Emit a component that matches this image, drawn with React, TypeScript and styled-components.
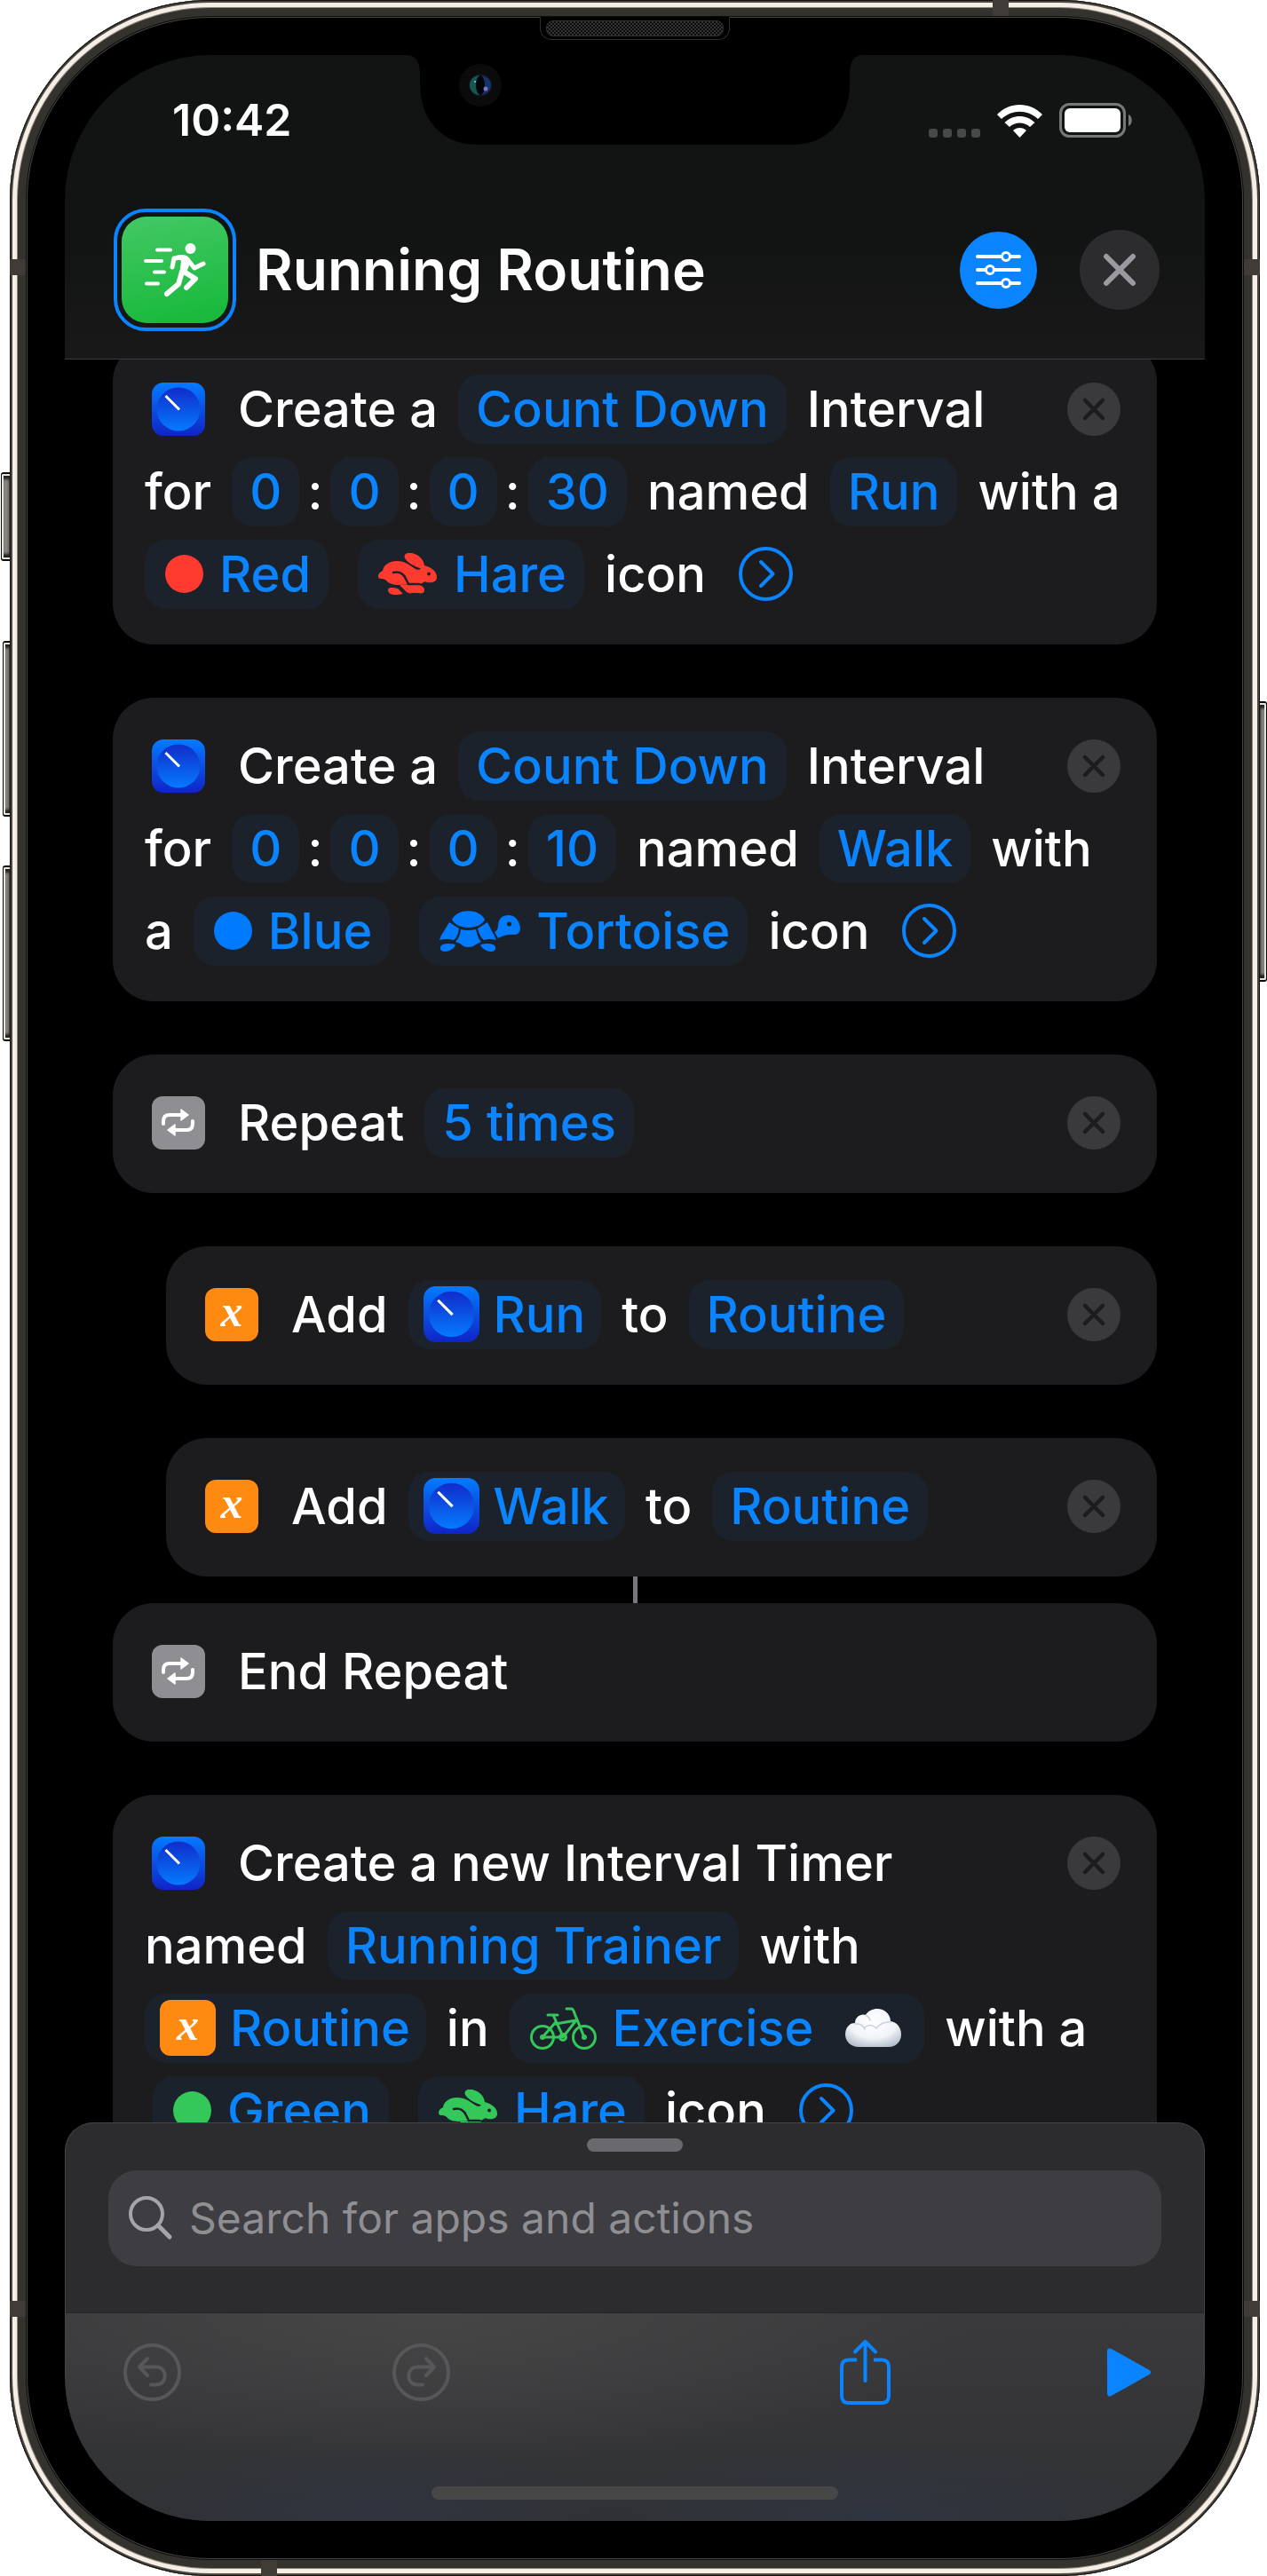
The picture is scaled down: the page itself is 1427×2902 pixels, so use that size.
import React from "react";
import styled, { createGlobalStyle } from "styled-components";

const blue = "#0a84ff";
const chipFill = "#1c222b";

const GlobalStyle = createGlobalStyle`
  * { box-sizing: border-box; }
  body { margin: 0; background: #fff; font-family: Inter, "Liberation Sans", sans-serif; color: #fff; }
  button { font: inherit; color: inherit; border: 0; padding: 0; background: none; cursor: pointer; }
  svg { display: block; flex: none; }
`;

/* ---------- Device ---------- */

const Stage = styled.div`
  padding: 0 8px 0 11px;
`;

const Device = styled.div`
  position: relative;
  display: flex;
  height: 100vh;
  padding: 62px;
  border-radius: 226px;
  background: #000;
  box-shadow: inset 0 0 0 1px #11110f, inset 0 0 0 3px #4a4843, inset 0 0 0 8px #f6ede5, inset 0 0 0 9px #8b8680,
    inset 0 0 0 18px #33322d, inset 0 0 0 19px #0c0c0c, inset 0 0 0 20px #454545;
`;

const SideKey = styled.span<{ $side: "left" | "right"; $top: number; $height: number; $depth: number }>`
  position: absolute;
  ${(p) => p.$side}: ${(p) => -p.$depth}px;
  top: ${(p) => p.$top}px;
  width: ${(p) => p.$depth}px;
  height: ${(p) => p.$height}px;
  border: solid #0b0b0a;
  border-width: ${(p) => (p.$side === "left" ? "2px 0 2px 1px" : "2px 1px 2px 0")};
  border-radius: ${(p) => (p.$side === "left" ? "3px 0 0 3px" : "0 3px 3px 0")};
  background: #85847f;
  box-shadow: inset ${(p) => (p.$side === "left" ? "2px" : "-2px")} 0 0 #e6e5dc, inset 0 2px 0 #e6e5dc,
    inset 0 -2px 0 #e6e5dc, inset 0 6px 3px #22221f, inset 0 -6px 3px #22221f;
`;

const Band = styled.span<{ $edge: "left" | "right" | "top" | "bottom"; $at: number }>`
  position: absolute;
  background: #413b38;
  ${(p) => p.$edge}: 0;
  ${(p) =>
    p.$edge === "left" || p.$edge === "right"
      ? `top: ${p.$at}px; width: 18px; height: 18px;`
      : `${p.$edge === "top" ? "right" : "left"}: ${p.$at}px; width: 18px; height: 18px;`}
`;

const Speaker = styled.span`
  position: absolute;
  top: 19px;
  left: 50%;
  width: 214px;
  height: 26px;
  margin-left: -107px;
  padding: 4px 6px;
  border: 1px solid #2c2c2c;
  border-top: 0;
  border-radius: 0 0 13px 13px;
  background: #000;

  &::before {
    content: "";
    display: block;
    height: 16px;
    border: 1px solid #303030;
    border-radius: 8px;
    background: repeating-conic-gradient(#333 0 25%, #0c0c0c 0 50%) 0 0 / 4px 4px;
  }
`;

const Screen = styled.main`
  position: relative;
  flex: 1;
  min-width: 0;
  display: flex;
  flex-direction: column;
  overflow: hidden;
  border-radius: 164px;
  background: #000;
`;

const NotchShape = styled.svg`
  position: absolute;
  top: 0;
  left: 50%;
  margin-left: -258px;
`;

/* ---------- Header ---------- */

const Header = styled.header`
  position: relative;
  z-index: 1;
  flex: none;
  border-bottom: 1px solid #3b3c3c;
  background: linear-gradient(#121413, #121413 60%, #181918);
`;

const StatusBar = styled.div`
  display: flex;
  align-items: center;
  justify-content: space-between;
  height: 146px;
  padding: 0 81px 0 121px;
  font-size: 50px;
  font-weight: 600;
`;

const StatusIcons = styled.div`
  display: flex;
  align-items: flex-end;
  gap: 19px;
`;

const TitleBar = styled.div`
  display: flex;
  align-items: center;
  padding: 27px 51px 31px 55px;
`;

const ShortcutIcon = styled.button`
  width: 138px;
  height: 138px;
  padding: 5px;
  border: 4px solid ${blue};
  border-radius: 36px;
`;

const Title = styled.h1`
  flex: 1;
  margin: 0 0 0 22px;
  font-size: 64px;
  line-height: 80px;
  font-weight: 600;
  white-space: nowrap;
`;

const RoundButton = styled.button<{ $size: number; $fill: string }>`
  display: flex;
  align-items: center;
  justify-content: center;
  flex: none;
  width: ${(p) => p.$size}px;
  height: ${(p) => p.$size}px;
  border-radius: 50%;
  background: ${(p) => p.$fill};

  & + & { margin-left: 48px; }
`;

/* ---------- Actions ---------- */

const ActionList = styled.div`
  flex: 1;
  min-height: 0;
  display: flex;
  flex-direction: column;
  gap: 60px;
  margin-top: -21px;
  padding: 0 54px;
  overflow: hidden;
`;

const Group = styled.div`
  display: flex;
  flex-direction: column;
  align-items: center;
`;

const Connector = styled.span`
  width: 5px;
  height: 30px;
  background: #77777d;
`;

const Card = styled.section<{ $nested?: boolean }>`
  flex: none;
  align-self: stretch;
  margin-left: ${(p) => (p.$nested ? 60 : 0)}px;
  padding: 30px 41px 33px 36px;
  border-radius: 46px;
  background: #1c1c1e;
  font-size: 56px;
  font-weight: 500;
`;

const Line = styled.div<{ $indent?: boolean }>`
  display: flex;
  align-items: center;
  gap: 23px;
  height: 93px;
  padding-left: ${(p) => (p.$indent ? 9 : 0)}px;
  line-height: 78px;
  white-space: nowrap;
`;

const AppIcon = styled.span`
  display: flex;
  flex: none;
  margin: 0 14px 0 8px;
`;

const Chip = styled.button<{ $icon?: "glyph" | "app" }>`
  display: flex;
  align-items: center;
  flex: none;
  gap: ${(p) => (p.$icon === "app" ? 16 : 18)}px;
  height: 78px;
  padding: ${(p) => (p.$icon === "app" ? "0 18px 0 17px" : p.$icon === "glyph" ? "0 20px 0 23px" : "0 20px")};
  border-radius: 24px;
  background: ${chipFill};
  color: ${blue};

  & + & { margin-left: 10px; }
`;

const TrailingEmoji = styled.span`
  margin: 0 6px 0 18px;
`;

const Duration = styled.span`
  display: flex;
  align-items: center;
`;

const Colon = styled.span`
  width: 35px;
  text-align: center;
`;

const More = styled.button`
  margin-left: 14px;
`;

const Remove = styled.button`
  margin-left: auto;
`;

const VariableTile = styled.span<{ $size: number }>`
  display: flex;
  align-items: center;
  justify-content: center;
  width: ${(p) => p.$size}px;
  height: ${(p) => p.$size}px;
  padding-bottom: 8px;
  border-radius: 12px;
  background: #ff8a12;
  color: #fff;
  font: italic bold 50px/50px "Liberation Serif", serif;
`;

/* ---------- Bottom sheet ---------- */

const Sheet = styled.footer`
  position: relative;
  flex: none;
  border: 1px solid #454547;
  border-width: 1px 1px 0;
  border-radius: 32px 32px 0 0;
  background: #2c2c2e;
  overflow: hidden;
`;

const Grabber = styled.div`
  width: 108px;
  height: 15px;
  margin: 17px auto 21px;
  border-radius: 8px;
  background: #69696e;
`;

const SearchField = styled.label`
  display: flex;
  align-items: center;
  gap: 18px;
  height: 108px;
  margin: 0 48px 52px;
  padding: 0 22px;
  border-radius: 32px;
  background: #3e3d42;
`;

const SearchInput = styled.input`
  flex: 1;
  min-width: 0;
  height: 80px;
  padding: 0;
  border: 0;
  outline: 0;
  background: none;
  color: #fff;
  font: 400 48px/80px Inter, "Liberation Sans", sans-serif;

  &::placeholder { color: #8e8e93; opacity: 1; }
`;

const Toolbar = styled.div`
  display: flex;
  flex-direction: column;
  justify-content: space-between;
  height: 235px;
  padding: 28px 0 24px;
  border-top: 1px solid #252527;
  background:
    radial-gradient(ellipse 300px 90px at 27% 100%, #2f3440, transparent),
    radial-gradient(ellipse 340px 90px at 71% 100%, #2e3440, transparent),
    radial-gradient(ellipse 620px 170px at 32% 0, #464647, transparent),
    linear-gradient(#3a3a3c, #303133);
`;

const Tools = styled.div`
  display: flex;
  justify-content: space-between;
  padding: 0 60px 0 65px;
`;

const ToolGroup = styled.div<{ $gap: number }>`
  display: flex;
  align-items: center;
  gap: ${(p) => p.$gap}px;
  height: 76px;
`;

const HomeIndicator = styled.div`
  align-self: center;
  width: 458px;
  height: 15px;
  border-radius: 8px;
  background: #474747;
`;

/* ---------- Drawings ---------- */

const Notch = () => (
  <NotchShape width="516" height="101" viewBox="0 0 516 101" aria-hidden="true">
    <path d="M0 0 C12 0 16 8 16 22 V32 C16 76 44 101 80 101 H436 C472 101 500 76 500 32 V22 C500 8 504 0 516 0 Z" fill="#000" />
    <circle cx="84" cy="34" r="24" fill="#0b0b0c" />
    <circle cx="84" cy="34" r="13" fill="#111316" />
    <ellipse cx="84" cy="34" rx="12" ry="11" fill="#15346f" />
    <path d="M83 23 A11 11 0 0 0 83 45 Z" fill="#175750" />
    <ellipse cx="84" cy="34" rx="5" ry="11" fill="#02040a" />
    <circle cx="90" cy="38" r="2.500" fill="#8a6fb8" />
    <circle cx="78" cy="30" r="1" fill="#7fd0e8" />
  </NotchShape>
);

const Cellular = () => (
  <svg width="58" height="10" viewBox="0 0 58 10" fill="#474948" aria-hidden="true">
    {[0, 16, 32, 48].map((x) => (
      <rect key={x} x={x} width="10" height="10" rx="3" />
    ))}
  </svg>
);

const Wifi = () => (
  <svg width="51" height="37" viewBox="0 0 51 37" fill="#fff" aria-hidden="true">
    <path d="M0 11 C14 -3.600 37 -3.600 51 11 L46 16 C34 5 17 5 5 16 Z" />
    <path d="M8.500 20 C18 10.500 33 10.500 42.500 20 L37 25 C31 19 20 19 14 25 Z" />
    <path d="M18 29 C22 25 29 25 33 29 L25.500 37 Z" />
  </svg>
);

const Battery = () => (
  <svg width="83" height="39" viewBox="0 0 83 39" aria-hidden="true">
    <rect x="1.500" y="1.500" width="72" height="36" rx="10" fill="none" stroke="#77787a" strokeWidth="3" />
    <rect x="6" y="6" width="63" height="27" rx="6" fill="#fff" />
    <path d="M78 13 C83 15 83 24 78 26 Z" fill="#77787a" />
  </svg>
);

const Runner = () => (
  <svg width="120" height="120" viewBox="0 0 120 120" aria-hidden="true">
    <defs>
      <linearGradient id="green" x1="0" y1="0" x2=".2" y2="1">
        <stop offset="0" stopColor="#43c865" />
        <stop offset="1" stopColor="#1bba3e" />
      </linearGradient>
    </defs>
    <rect width="120" height="120" rx="28" fill="url(#green)" />
    <circle cx="77.500" cy="36" r="6" fill="#fff" />
    <path d="M61 44 Q67 42 73 44 Q77 46 77 52 L72 66 L65 66 L67 50 Z" fill="#fff" />
    <g fill="none" stroke="#fff" strokeLinecap="round" strokeLinejoin="round">
      <path strokeWidth="4" d="M40 37.500H55M27 50H45M37 62.500H48M28 75.500H41" />
      <path strokeWidth="5" d="M57 57 L59 47 L70 46 M74 48 L82 58 L92 53" />
      <path strokeWidth="6" d="M68 62 L64 76 L51 87 M70 62 L83 70 L73 80" />
    </g>
  </svg>
);

const Sliders = () => (
  <svg width="51" height="44" viewBox="0 0 51 44" stroke="#fff" strokeWidth="4" strokeLinecap="round" fill={blue} aria-hidden="true">
    <path d="M2 7H49M2 22H49M2 37H49" />
    <circle cx="34" cy="7" r="4.500" strokeWidth="3" />
    <circle cx="16" cy="22" r="4.500" strokeWidth="3" />
    <circle cx="34" cy="37" r="4.500" strokeWidth="3" />
  </svg>
);

const Cross = () => (
  <svg width="38" height="38" viewBox="0 0 38 38" stroke="#9a9aa1" strokeWidth="6" strokeLinecap="round" aria-hidden="true">
    <path d="M4 4L34 34M34 4L4 34" />
  </svg>
);

const RemoveButton = () => (
  <Remove aria-label="Remove action">
    <svg width="60" height="60" viewBox="0 0 60 60" aria-hidden="true">
      <circle cx="30" cy="30" r="30" fill="#3a3a3c" />
      <path d="M20 20L40 40M40 20L20 40" stroke="#1c1c1e" strokeWidth="4.500" strokeLinecap="round" />
    </svg>
  </Remove>
);

const MoreButton = () => (
  <More aria-label="Show more">
    <svg width="61" height="61" viewBox="0 0 61 61" fill="none" stroke={blue} strokeWidth="4" strokeLinecap="round" strokeLinejoin="round" aria-hidden="true">
      <circle cx="30.500" cy="30.500" r="28.500" />
      <path d="M25 17L38.500 30.500L25 44" />
    </svg>
  </More>
);

const Dial = ({ size = 60 }: { size?: number }) => (
  <svg width={size} height={size} viewBox="0 0 60 60" aria-hidden="true">
    <defs>
      <linearGradient id="dialOuter" x1="0" y1="0" x2="0" y2="1">
        <stop offset="0" stopColor="#047bff" />
        <stop offset="1" stopColor="#1024c6" />
      </linearGradient>
      <linearGradient id="dialInner" x1="0" y1="0" x2="0" y2="1">
        <stop offset="0" stopColor="#102cc9" />
        <stop offset="1" stopColor="#057aff" />
      </linearGradient>
    </defs>
    <rect width="60" height="60" rx="13" fill="url(#dialOuter)" />
    <circle cx="30" cy="30" r="24.500" fill="url(#dialInner)" />
    <path d="M15.500 15L31 30.500" stroke="#fff" strokeWidth="3" />
  </svg>
);

const Repeat = () => (
  <svg width="60" height="60" viewBox="0 0 60 60" aria-hidden="true">
    <rect width="60" height="60" rx="12" fill="#8e8e93" />
    <path d="M13 31V28Q13 21 20 21H34M46 28V31Q46 38 39 38H26" fill="none" stroke="#fff" strokeWidth="4" strokeLinecap="round" />
    <path d="M33 15L41 21L33 27ZM26 32L18 38L26 44Z" fill="#fff" stroke="#fff" strokeWidth="1.500" strokeLinejoin="round" />
  </svg>
);

const Dot = ({ color }: { color: string }) => (
  <svg width="43" height="43" viewBox="0 0 43 43" fill={color} aria-hidden="true">
    <circle cx="21.500" cy="21.500" r="21.500" />
  </svg>
);

const Hare = ({ color }: { color: string }) => (
  <svg width="67" height="48" viewBox="0 0 67 48" fill={color} aria-hidden="true">
    <path d="M0 26 C0 23 3 21 5 20 C6 13 13 9 21 9 C30 9 36 14 42 18 C45 20 49 18 47 17 C41 15 33 11 30 6 C28 1 33 -1 38 0 C46 2 51 7 52 14 C60 16 66 21 66 27 C66 32 62 34 55 33 C52 30 49 36 46 34 L22 36 C18 36 14 35 11 33 C8 29 5 29 3 29 C1 29 0 28 0 26 Z" />
    <path d="M24 36 C30 35 42 36 46 36 C50 37 52 39 52 42 C52 45 49 46 45 45 L39 45 C35 46 33 45 31 43 Z" />
    <path d="M11 41 C12 38 18 39 22 40 L28 46 C22 47 11 49 11 41 Z" />
    <path d="M17 22 C24 20 29 24 31 29 L34 35 L46 35" fill="none" stroke={chipFill} strokeWidth="2.500" strokeLinecap="round" />
    <circle cx="57" cy="23.500" r="2" fill={chipFill} />
  </svg>
);

const Tortoise = () => (
  <svg width="91" height="46" viewBox="0 0 91 46" fill="#007aff" aria-hidden="true">
    <path d="M14 10 C20 -3 45 -3 51 10 Q49 14 43 17 Q32 21 22 17 Q16 14 14 10 Z" />
    <path d="M11 13 L22 20 Q21 29 16 33 Q8 31 0 33 Q1 28 5 23 Z" />
    <path d="M54 13 L43 20 Q45 29 50 33 Q57 31 64 33 Q62 28 59 23 Z" />
    <path d="M24 21 Q32 23 41 21 Q43 31 47 35 Q42 37 38 40 Q32 42 27 40 Q23 36 18 35 Q23 30 24 21 Z" />
    <path d="M1 41 Q2 37 10 37 Q17 37 18 39 Q14 45 7 46 Q0 46 1 41 Z" />
    <path d="M63 41 Q62 37 54 37 Q47 37 46 39 Q50 45 57 46 Q64 46 63 41 Z" />
    <path d="M66 31 L62 24 Q66 22 66 16 Q67 5 78 5 Q88 5 91 19 Q91 26 85 27 Q75 26 66 31 Z" />
    <circle cx="78.500" cy="15" r="2.500" fill={chipFill} />
  </svg>
);

const Bicycle = () => (
  <svg width="75" height="48" viewBox="0 0 75 48" fill="none" stroke="#34c759" strokeWidth="3" strokeLinecap="round" strokeLinejoin="round" aria-hidden="true">
    <circle cx="14" cy="34" r="12.500" />
    <circle cx="61" cy="34" r="12.500" />
    <path d="M20 9H31M26 9L37 33M41 2H47Q49 3 50 7L61 34M29 17L14 34H37L52 15L29 19" />
    <circle cx="37" cy="34" r="3.500" />
    <circle cx="14" cy="34" r="1.500" />
    <circle cx="61" cy="34" r="1.500" />
  </svg>
);

const Cloud = () => (
  <svg width="63" height="44" viewBox="0 0 63 44" aria-hidden="true">
    <defs>
      <radialGradient id="puff" cx=".5" cy=".35" r=".7">
        <stop offset="0" stopColor="#ffffff" />
        <stop offset=".6" stopColor="#f1f4f8" />
        <stop offset="1" stopColor="#b4bfcc" />
      </radialGradient>
    </defs>
    <path d="M15 43 C6 43 0 36 0 29 C0 21 5 16 11 16 C11 9 18 5 23 7 C26 2 31 0 36 0 C44 0 51 6 51 14 C58 15 63 21 63 29 C63 37 57 43 49 43 Z" fill="url(#puff)" />
    <path d="M11 17 Q19 16 22 23 M22 21 Q28 16 34 21 M35 22 Q41 14 51 15 M23 7 Q27 9 28 13" fill="none" stroke="#c9d1da" strokeWidth="1.500" strokeLinecap="round" />
  </svg>
);

const Magnifier = () => (
  <svg width="51" height="50" viewBox="0 0 51 50" fill="none" stroke="#a4a4aa" strokeLinecap="round" aria-hidden="true">
    <circle cx="21" cy="20" r="18" strokeWidth="4" />
    <path d="M34 33L47 46" strokeWidth="5" />
  </svg>
);

const Turn = ({ redo }: { redo?: boolean }) => (
  <svg width="65" height="65" viewBox="0 0 65 65" fill="none" stroke="#57575a" strokeWidth="4" strokeLinecap="round" strokeLinejoin="round" aria-hidden="true">
    <circle cx="32.500" cy="32.500" r="30.500" />
    <path transform={redo ? "translate(65 0) scale(-1 1)" : undefined} d="M27 17L18 26.500L27 36M19 26.500H37C50 26.500 50 46.500 37 46.500H31" />
  </svg>
);

const Share = () => (
  <svg width="57" height="73" viewBox="0 0 57 73" fill="none" stroke={blue} strokeWidth="4" strokeLinecap="round" strokeLinejoin="round" aria-hidden="true">
    <path d="M19 22.500H10Q2 22.500 2 30.500V63Q2 71 10 71H47Q55 71 55 63V30.500Q55 22.500 47 22.500H38" strokeLinecap="butt" />
    <path d="M28.500 46V3M17 13.500L28.500 2L40 13.500" />
  </svg>
);

const Play = () => (
  <svg width="49" height="55" viewBox="0 0 49 55" fill={blue} stroke={blue} strokeWidth="6" strokeLinejoin="round" aria-hidden="true">
    <path d="M3 3.500L46 27.500L3 51.500Z" />
  </svg>
);

/* ---------- Page ---------- */

const Timer = ({ seconds }: { seconds: string }) => (
  <Duration>
    {["0", "0", "0"].map((value, i) => (
      <React.Fragment key={i}>
        <Chip>{value}</Chip>
        <Colon>:</Colon>
      </React.Fragment>
    ))}
    <Chip>{seconds}</Chip>
  </Duration>
);

const CreateInterval = () => (
  <Line>
    <AppIcon><Dial /></AppIcon>
    <span>Create a</span>
    <Chip>Count Down</Chip>
    <span>Interval</span>
    <RemoveButton />
  </Line>
);

const AddToRoutine = ({ name }: { name: string }) => (
  <Card $nested>
    <Line>
      <AppIcon><VariableTile $size={60}>x</VariableTile></AppIcon>
      <span>Add</span>
      <Chip $icon="app"><Dial size={63} />{name}</Chip>
      <span>to</span>
      <Chip>Routine</Chip>
      <RemoveButton />
    </Line>
  </Card>
);

export default function App() {
  return (
    <Stage>
      <GlobalStyle />
      <Device>
        <SideKey $side="left" $top={532} $height={100} $depth={10} />
        <SideKey $side="left" $top={722} $height={198} $depth={8} />
        <SideKey $side="left" $top={975} $height={198} $depth={8} />
        <SideKey $side="right" $top={790} $height={316} $depth={8} />
        <Band $edge="left" $at={292} />
        <Band $edge="right" $at={292} />
        <Band $edge="left" $at={2592} />
        <Band $edge="right" $at={2592} />
        <Band $edge="top" $at={283} />
        <Band $edge="bottom" $at={283} />
        <Speaker />

        <Screen>
          <Header>
            <StatusBar>
              <span>10:42</span>
              <StatusIcons>
                <Cellular />
                <Wifi />
                <Battery />
              </StatusIcons>
            </StatusBar>
            <TitleBar>
              <ShortcutIcon aria-label="Shortcut icon"><Runner /></ShortcutIcon>
              <Title>Running Routine</Title>
              <RoundButton $size={87} $fill={blue} aria-label="Settings"><Sliders /></RoundButton>
              <RoundButton $size={90} $fill="#2c2c2e" aria-label="Close"><Cross /></RoundButton>
            </TitleBar>
            <Notch />
          </Header>

          <ActionList>
            <Card>
              <CreateInterval />
              <Line>
                <span>for</span>
                <Timer seconds="30" />
                <span>named</span>
                <Chip>Run</Chip>
                <span>with a</span>
              </Line>
              <Line>
                <Chip $icon="glyph"><Dot color="#ff3b30" />Red</Chip>
                <Chip $icon="glyph"><Hare color="#ff3b30" />Hare</Chip>
                <span>icon</span>
                <MoreButton />
              </Line>
            </Card>

            <Card>
              <CreateInterval />
              <Line>
                <span>for</span>
                <Timer seconds="10" />
                <span>named</span>
                <Chip>Walk</Chip>
                <span>with</span>
              </Line>
              <Line>
                <span>a</span>
                <Chip $icon="glyph"><Dot color="#007aff" />Blue</Chip>
                <Chip $icon="glyph"><Tortoise />Tortoise</Chip>
                <span>icon</span>
                <MoreButton />
              </Line>
            </Card>

            <Card>
              <Line>
                <AppIcon><Repeat /></AppIcon>
                <span>Repeat</span>
                <Chip>5 times</Chip>
                <RemoveButton />
              </Line>
            </Card>

            <AddToRoutine name="Run" />

            <Group>
              <AddToRoutine name="Walk" />
              <Connector />
              <Card>
                <Line>
                  <AppIcon><Repeat /></AppIcon>
                  <span>End Repeat</span>
                </Line>
              </Card>
            </Group>

            <Card>
              <Line>
                <AppIcon><Dial /></AppIcon>
                <span>Create a new Interval Timer</span>
                <RemoveButton />
              </Line>
              <Line>
                <span>named</span>
                <Chip>Running Trainer</Chip>
                <span>with</span>
              </Line>
              <Line>
                <Chip $icon="app"><VariableTile $size={63}>x</VariableTile>Routine</Chip>
                <span>in</span>
                <Chip $icon="glyph"><Bicycle />Exercise<TrailingEmoji><Cloud /></TrailingEmoji></Chip>
                <span>with a</span>
              </Line>
              <Line $indent>
                <Chip $icon="glyph"><Dot color="#34c759" />Green</Chip>
                <Chip $icon="glyph"><Hare color="#34c759" />Hare</Chip>
                <span>icon</span>
                <MoreButton />
              </Line>
            </Card>
          </ActionList>

          <Sheet>
            <Grabber />
            <SearchField>
              <Magnifier />
              <SearchInput type="search" aria-label="Search for apps and actions" placeholder="Search for apps and actions" />
            </SearchField>
            <Toolbar>
              <Tools>
                <ToolGroup $gap={238}>
                  <button aria-label="Undo"><Turn /></button>
                  <button aria-label="Redo"><Turn redo /></button>
                </ToolGroup>
                <ToolGroup $gap={244}>
                  <button aria-label="Share"><Share /></button>
                  <button aria-label="Run"><Play /></button>
                </ToolGroup>
              </Tools>
              <HomeIndicator />
            </Toolbar>
          </Sheet>
        </Screen>
      </Device>
    </Stage>
  );
}
